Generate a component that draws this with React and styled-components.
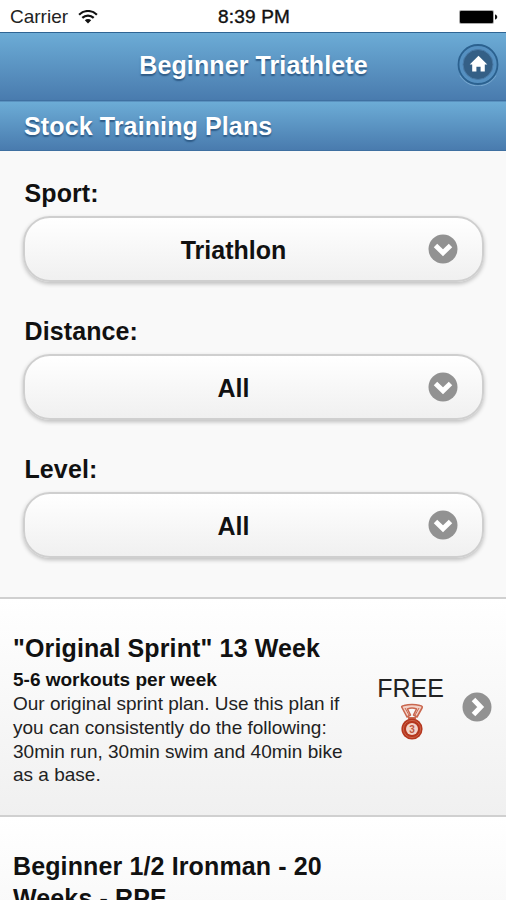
import React from 'react'
import styled, { createGlobalStyle } from 'styled-components'

const GlobalStyle = createGlobalStyle`
  body {
    margin: 0;
    background-color: #f9f9f9;
    font-family: "Liberation Sans", Arial, sans-serif;
    color: #111;
  }
`

const Screen = styled.div`
  width: 506px;
  height: 900px;
  overflow: hidden;
  background-color: #f9f9f9;
`

const StatusBar = styled.div`
  display: grid;
  grid-template-columns: 1fr auto 1fr;
  align-items: center;
  box-sizing: border-box;
  height: 32px;
  padding: 2px 8px 0 10px;
  background-color: white;
  font-size: 19px;
  line-height: 28px;
`

const Carrier = styled.div`
  display: flex;
  align-items: center;
  gap: 10px;
  color: #222;
`

const Clock = styled.div`
  font-size: 19px;
  letter-spacing: 0.2px;
  color: #111;
  -webkit-text-stroke: 0.4px #111;
`

const Battery = styled.div`
  display: flex;
  justify-content: flex-end;
`

const Bar = styled.div`
  display: flex;
  align-items: center;
  box-sizing: border-box;
  height: ${({ height }) => height};
  padding: ${({ padding }) => padding};
  border-top: 1px solid ${({ edge }) => edge};
  border-bottom: 1px solid #3f70a1;
  background-image: linear-gradient(#6cacd6, #497bae);
  color: white;
  text-shadow: 0 1.5px 1.5px #2d5a86;
`

const PageTitle = styled.h1`
  flex: 1;
  margin: 0;
  font-size: 25px;
  line-height: 32px;
  letter-spacing: 0.1px;
  text-align: center;
`

const SectionTitle = styled.h2`
  margin: 0;
  font-size: 25px;
  line-height: 32px;
  letter-spacing: 0.12px;
`

const HomeButton = styled.a`
  display: block;
  width: 42px;
  height: 42px;
`

const Filters = styled.div`
  display: flex;
  flex-direction: column;
  gap: 32px;
  box-sizing: border-box;
  height: 446px;
  padding: 26px 22px 0 23px;
`

const Field = styled.div`
  display: flex;
  flex-direction: column;
  gap: 7px;
`

const Label = styled.label`
  padding-left: 1.5px;
  font-size: 25px;
  font-weight: bold;
  line-height: 32px;
  letter-spacing: 0.1px;
`

const Select = styled.div`
  display: flex;
  align-items: center;
  box-sizing: border-box;
  height: 66px;
  margin-bottom: 1px;
  padding: 0 24px 0 0;
  border: 2px solid #cfcfcf;
  border-radius: 27px;
  background-image: linear-gradient(#fff, #f0f0f0);
  box-shadow: 0 2px 4px rgba(0, 0, 0, 0.24);
`

const Value = styled.span`
  flex: 1;
  padding: 2px 0 0 14px;
  font-size: 25px;
  font-weight: bold;
  text-align: center;
`

const PlanList = styled.ul`
  margin: 0;
  padding: 0;
  list-style: none;
`

const PlanRow = styled.li`
  display: flex;
  align-items: center;
  box-sizing: border-box;
  height: 218px;
  padding: 0 14px 0 13px;
  border-top: 2px solid #d0d0d0;
  background-image: linear-gradient(#fff, #f0f0f0);
`

const PlanText = styled.div`
  align-self: flex-start;
  width: 346px;
  padding-top: 33px;
`

const PlanName = styled.h3`
  margin: 0 0 4px;
  font-size: 25px;
  line-height: 32px;
  letter-spacing: 0.13px;
`

const Frequency = styled.p`
  margin: 0;
  font-size: 19px;
  font-weight: bold;
  line-height: 24px;
`

const Description = styled.p`
  margin: 0;
  font-size: 19px;
  line-height: 23.8px;
  color: #222;
`

const Price = styled.div`
  display: flex;
  flex-direction: column;
  align-items: center;
  flex: 1;
  font-size: 25px;
  line-height: 30px;
  color: #222;
`

const Medal = styled.svg`
  margin-left: 2px;
`

const WifiIcon = () => (
  <svg width="20" height="15" viewBox="0 0 20 15" fill="none" stroke="#111" strokeWidth="2.2">
    <path d="M1.1 4.7a12.6 12.6 0 0 1 17.8 0" />
    <path d="M4.3 7.9a8.1 8.1 0 0 1 11.4 0" />
    <path d="M6.8 10.3a4.5 4.5 0 0 1 6.4 0L10 13.5z" fill="#111" stroke="none" />
  </svg>
)

const BatteryIcon = () => (
  <svg width="40" height="16" viewBox="0 0 40 16">
    <rect x="1" y="1" width="35" height="14" rx="2" fill="#aaa" />
    <rect x="2" y="2" width="33" height="12" rx="1" fill="#000" />
    <path d="M37 5.5c3 .6 3 4.4 0 5z" fill="#111" />
  </svg>
)

const HomeIcon = () => (
  <svg width="42" height="42" viewBox="0 0 42 42">
    <circle cx="21" cy="20.5" r="19.5" fill="#5590c1" stroke="#2b618f" strokeWidth="1.8" />
    <path d="M3 31.5a20.8 20.8 0 0 0 36 0" fill="none" stroke="#78a8cf" strokeWidth="1" />
    <circle cx="21" cy="20.5" r="15" fill="#345f86" stroke="#4a7ba8" strokeWidth="1" />
    <path d="M21.5 11.8l8.8 8.7h-2.5v7h-4.2v-4.7h-4.2v4.7h-4.2v-7h-2.5z" fill="#fff" />
  </svg>
)

const ArrowIcon = ({ turn = 0 }) => (
  <svg width="30" height="30" viewBox="0 0 30 30">
    <circle cx="15" cy="15" r="14.5" fill="#929292" />
    <path
      d="M7.5 11.5l7.5 7.2 7.5-7.2"
      fill="none"
      stroke="#fff"
      strokeWidth="5"
      transform={`rotate(${turn} 15 15)`}
    />
  </svg>
)

const MedalIcon = () => (
  <Medal width="26" height="38" viewBox="0 0 26 38">
    <g fill="none" stroke="#c9674f" strokeWidth="1.6" strokeLinejoin="round">
      <path d="M3 4.5Q2 3 5 2.500Q13 .5 21 2.500Q24 3 23 5L18 14l-3.500-2 3-6q-4.500-2-9 0l3 6L8 14z" fill="#f3d3c9" />
      <path d="M6 5l4.500 8M20 5l-4.500 8" strokeWidth="1" />
      <path d="M9 15h8" strokeWidth="2" />
    </g>
    <circle cx="13" cy="26" r="10.6" fill="#b5361e" />
    <circle cx="13" cy="26" r="8.6" fill="none" stroke="#cb6248" strokeWidth="1" />
    <circle cx="13" cy="26" r="6" fill="#f3d3c9" />
    <text x="13" y="29.500" fontSize="10" fontWeight="bold" textAnchor="middle" fill="#bd5540">3</text>
  </Medal>
)

const filters = [
  { label: 'Sport:', value: 'Triathlon' },
  { label: 'Distance:', value: 'All' },
  { label: 'Level:', value: 'All' }
]

const App = () => (
  <Screen>
    <GlobalStyle />
    <StatusBar>
      <Carrier>
        Carrier
        <WifiIcon />
      </Carrier>
      <Clock>8:39 PM</Clock>
      <Battery>
        <BatteryIcon />
      </Battery>
    </StatusBar>
    <Bar as="header" height="69px" padding="0 7px 3px 50px" edge="#2f6594">
      <PageTitle>Beginner Triathlete</PageTitle>
      <HomeButton>
        <HomeIcon />
      </HomeButton>
    </Bar>
    <Bar height="50px" padding="0 24px" edge="#5a92c0">
      <SectionTitle>Stock Training Plans</SectionTitle>
    </Bar>
    <Filters>
      {filters.map(({ label, value }) => (
        <Field key={label}>
          <Label>{label}</Label>
          <Select>
            <Value>{value}</Value>
            <ArrowIcon />
          </Select>
        </Field>
      ))}
    </Filters>
    <PlanList>
      <PlanRow>
        <PlanText>
          <PlanName>"Original Sprint" 13 Week</PlanName>
          <Frequency>5-6 workouts per week</Frequency>
          <Description>
            Our original sprint plan. Use this plan if you can consistently do
            the following: 30min run, 30min swim and 40min bike as a base.
          </Description>
        </PlanText>
        <Price>
          FREE
          <MedalIcon />
        </Price>
        <ArrowIcon turn={-90} />
      </PlanRow>
      <PlanRow>
        <PlanText>
          <PlanName>Beginner 1/2 Ironman - 20 Weeks - RPE</PlanName>
        </PlanText>
      </PlanRow>
    </PlanList>
  </Screen>
)

export default App
